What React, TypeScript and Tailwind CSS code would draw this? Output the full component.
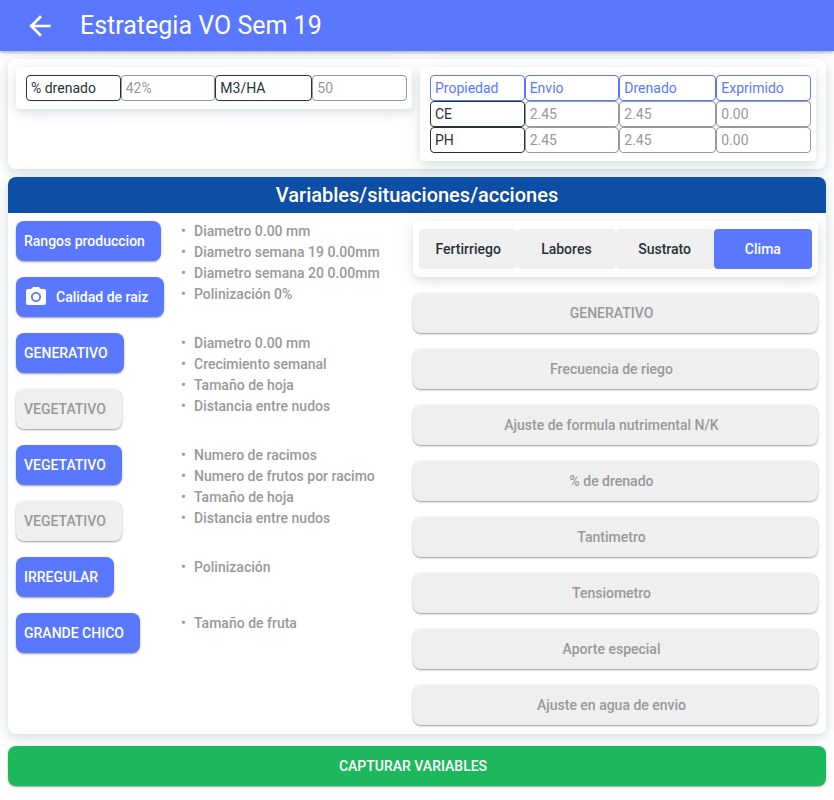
import { MdArrowBack, MdCameraAlt } from "react-icons/md";
import { clsx } from "clsx";

const CARD_SHADOW = "shadow-[0_4px_8px_rgba(20,60,80,0.12),0_0_24px_rgba(20,60,80,0.06)]";
const BUTTON_SHADOW = "shadow-[0_1px_3px_rgba(0,0,0,0.2),0_1px_1px_rgba(0,0,0,0.2)]";

type Action = { label: string; disabled?: boolean; camera?: boolean };
type Group = { actions: Action[]; notes: string[] };

const groups: Group[] = [
  {
    actions: [{ label: "Rangos produccion" }, { label: "Calidad de raiz", camera: true }],
    notes: ["Diametro 0.00 mm", "Diametro semana 19 0.00mm", "Diametro semana 20 0.00mm", "Polinización 0%"],
  },
  {
    actions: [{ label: "GENERATIVO" }, { label: "VEGETATIVO", disabled: true }],
    notes: ["Diametro 0.00 mm", "Crecimiento semanal", "Tamaño de hoja", "Distancia entre nudos"],
  },
  {
    actions: [{ label: "VEGETATIVO" }, { label: "VEGETATIVO", disabled: true }],
    notes: ["Numero de racimos", "Numero de frutos por racimo", "Tamaño de hoja", "Distancia entre nudos"],
  },
  { actions: [{ label: "IRREGULAR" }], notes: ["Polinización"] },
  { actions: [{ label: "GRANDE CHICO" }], notes: ["Tamaño de fruta"] },
];

const tabs = ["Fertirriego", "Labores", "Sustrato", "Clima"];

const settings = [
  "GENERATIVO",
  "Frecuencia de riego",
  "Ajuste de formula nutrimental N/K",
  "% de drenado",
  "Tantimetro",
  "Tensiometro",
  "Aporte especial",
  "Ajuste en agua de envio",
];

const columns = ["Propiedad", "Envio", "Drenado", "Exprimido"];
const rows = [
  { name: "CE", values: ["2.45", "2.45", "0.00"] },
  { name: "PH", values: ["2.45", "2.45", "0.00"] },
];

const CELL = "block h-[26px] w-full rounded border px-1 text-left text-sm leading-6 font-normal";
const FIELD = "border-[#999] bg-transparent text-[#999]";

function ActionButton({ label, disabled, camera }: Action) {
  return (
    <button
      type="button"
      disabled={disabled}
      className={clsx(
        "flex h-10 items-center gap-2 rounded-lg pr-4 pl-2 text-sm font-medium",
        BUTTON_SHADOW,
        disabled ? "bg-[#efefef] text-[#999]" : "bg-[#5a78ff] text-white",
      )}
    >
      {camera && <MdCameraAlt className="size-6" />}
      {label}
    </button>
  );
}

function Summary() {
  return (
    <section className={clsx("grid grid-cols-2 items-start gap-2 rounded-lg bg-white py-2 pr-[10px] pl-2", CARD_SHADOW)}>
      <div className={clsx("grid grid-cols-[1fr_1fr_97px_1fr] rounded bg-white py-2 pr-[5px] pl-[10px]", CARD_SHADOW)}>
        <label htmlFor="drenado" className={clsx(CELL, "border-[#263238] text-[#263238]")}>
          % drenado
        </label>
        <input id="drenado" readOnly defaultValue="42%" className={clsx(CELL, FIELD)} />
        <label htmlFor="m3ha" className={clsx(CELL, "border-[#263238] text-[#263238]")}>
          M3/HA
        </label>
        <input id="m3ha" readOnly defaultValue="50" className={clsx(CELL, FIELD)} />
      </div>
      <div className={clsx("rounded bg-white py-2 pr-[5px] pl-[10px]", CARD_SHADOW)}>
        <table className="w-full table-fixed border-separate border-spacing-0">
          <thead>
            <tr>
              {columns.map((column) => (
                <th key={column} scope="col" className={clsx("p-0", column === "Drenado" && "w-[97px]")}>
                  <span className={clsx(CELL, "border-[#5a78ff] text-[#5a78ff]")}>{column}</span>
                </th>
              ))}
            </tr>
          </thead>
          <tbody>
            {rows.map((row) => (
              <tr key={row.name}>
                <th scope="row" className="p-0">
                  <span className={clsx(CELL, "border-[#263238] text-[#263238]")}>{row.name}</span>
                </th>
                {row.values.map((value, i) => (
                  <td key={columns[i + 1]} className="p-0">
                    <input
                      readOnly
                      aria-label={`${row.name} ${columns[i + 1]}`}
                      defaultValue={value}
                      className={clsx(CELL, FIELD)}
                    />
                  </td>
                ))}
              </tr>
            ))}
          </tbody>
        </table>
      </div>
    </section>
  );
}

export default function App() {
  return (
    <div className="min-h-screen bg-[#fdfefe] font-[Roboto,sans-serif]">
      <header className="relative flex h-[51px] items-center gap-6 bg-[#5a78ff] pl-6 text-white shadow-[0_1px_4px_rgba(0,0,0,0.4)]">
        <button type="button" aria-label="Volver" className="flex size-8 items-center justify-center">
          <MdArrowBack className="size-8" />
        </button>
        <h1 className="text-[25px] leading-8 font-normal">Estrategia VO Sem 19</h1>
      </header>

      <main className="p-2">
        <Summary />

        <section className={clsx("mt-2 rounded-lg bg-white", CARD_SHADOW)}>
          <h2 className="h-9 rounded-t-lg bg-[#0d4ea6] text-center text-xl leading-9 font-medium text-white">
            Variables/situaciones/acciones
          </h2>
          <div className="grid grid-cols-2 px-2 pt-2 pb-[9px]">
            <div className="flex flex-col gap-4">
              {groups.map((group, index) => (
                <div key={index} className="grid grid-cols-[165px_1fr]">
                  <div className="flex flex-col items-start gap-4">
                    {group.actions.map((action, i) => (
                      <ActionButton key={i} {...action} />
                    ))}
                  </div>
                  <ul className="text-sm leading-[21px] font-medium text-[#999]">
                    {group.notes.map((note) => (
                      <li key={note} className="flex">
                        <span className="w-[13px]">•</span>
                        {note}
                      </li>
                    ))}
                  </ul>
                </div>
              ))}
            </div>

            <div className="-ml-1 flex flex-col gap-4">
              <div role="tablist" className={clsx("grid grid-cols-4 rounded-b-lg bg-white px-[6px] py-2", CARD_SHADOW)}>
                {tabs.map((tab) => (
                  <button
                    key={tab}
                    type="button"
                    role="tab"
                    aria-selected={tab === "Clima"}
                    className={clsx(
                      "h-10 rounded text-center text-sm font-medium",
                      tab === "Clima" ? "bg-[#5a78ff] text-white" : "bg-[#efefef] text-[#263238]",
                    )}
                  >
                    {tab}
                  </button>
                ))}
              </div>
              {settings.map((setting) => (
                <button
                  key={setting}
                  type="button"
                  disabled
                  className={clsx(
                    "h-10 rounded-lg bg-[#efefef] pr-4 pl-2 text-center text-sm font-medium text-[#999]",
                    BUTTON_SHADOW,
                  )}
                >
                  {setting}
                </button>
              ))}
            </div>
          </div>
        </section>

        <button
          type="button"
          className={clsx(
            "mt-3 h-10 w-full rounded-lg bg-[#1db75c] pr-4 pl-2 text-sm font-medium text-white",
            BUTTON_SHADOW,
          )}
        >
          CAPTURAR VARIABLES
        </button>
      </main>
    </div>
  );
}
